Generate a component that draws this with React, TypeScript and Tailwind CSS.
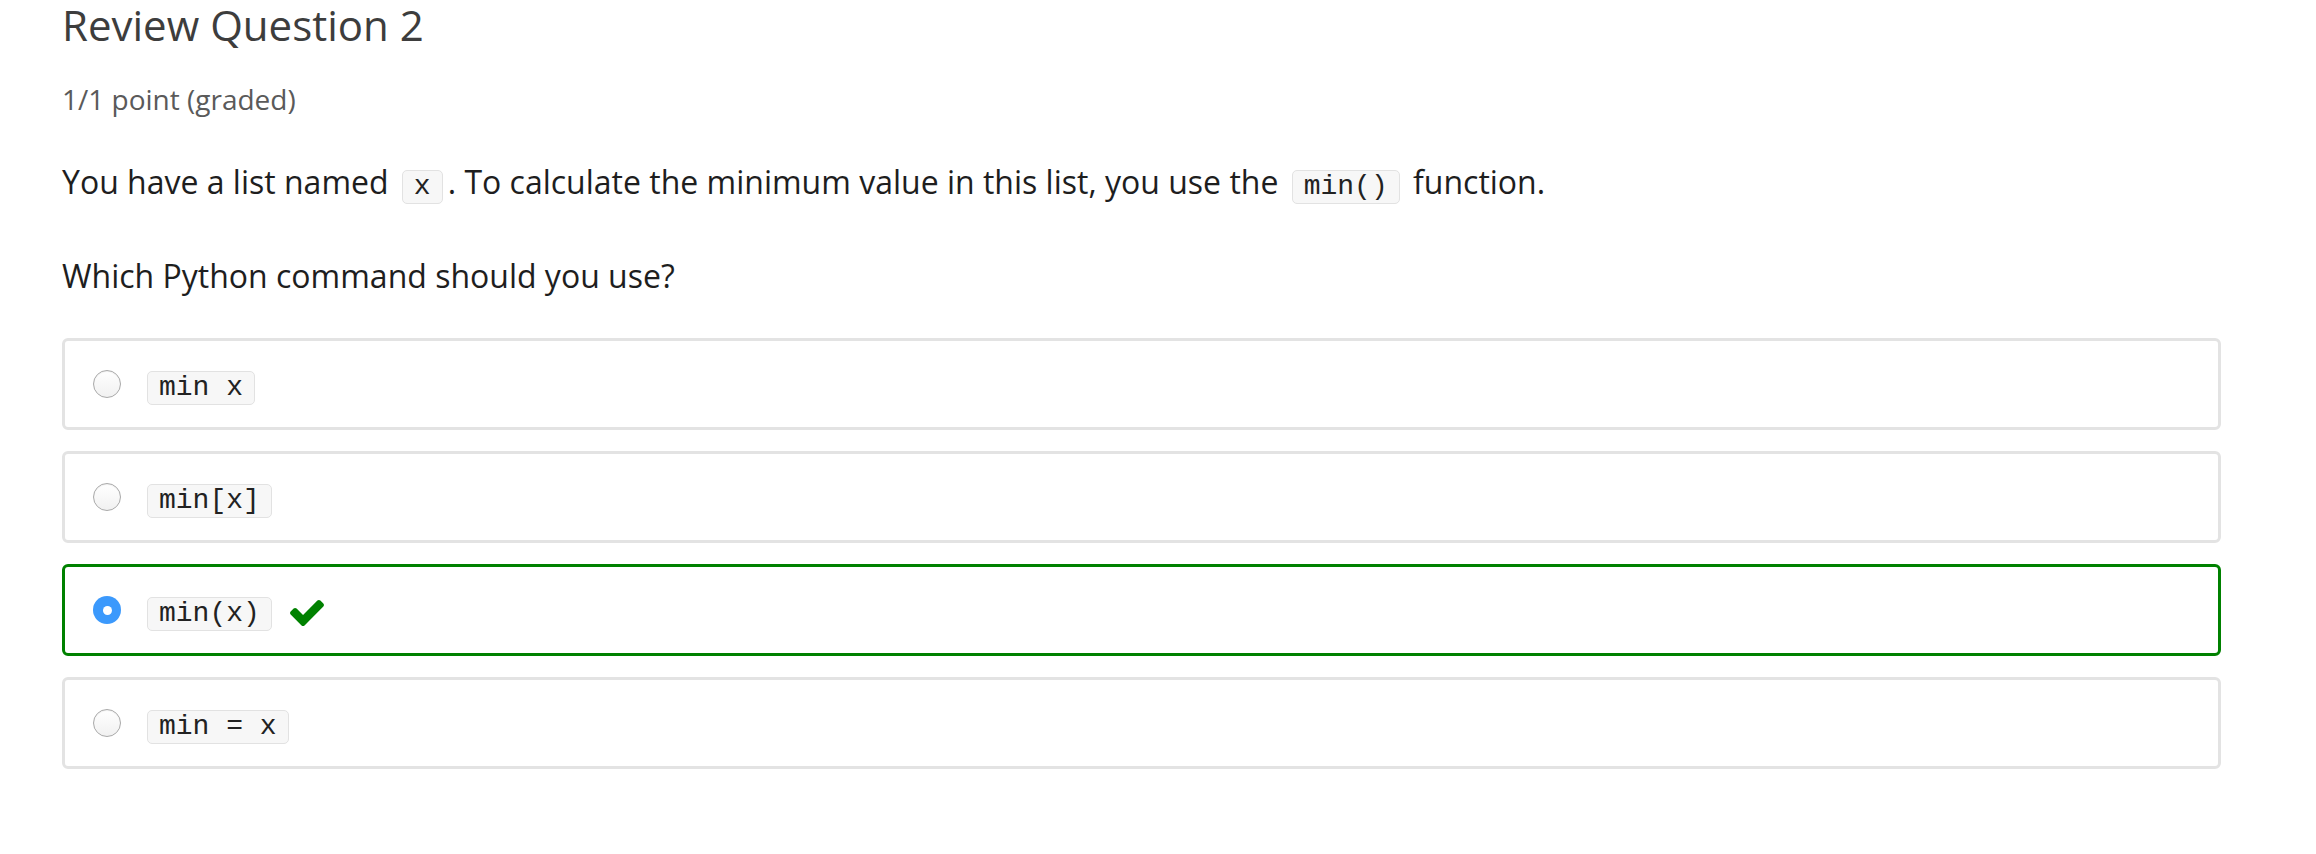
import { ReactNode } from 'react'

const options = [
  { id: 'a', code: 'min x', selected: false },
  { id: 'b', code: 'min[x]', selected: false },
  { id: 'c', code: 'min(x)', selected: true },
  { id: 'd', code: 'min = x', selected: false },
]

function Code({ children }: { children: ReactNode }) {
  return (
    <code className="inline-block mx-[5px] px-[11px] py-[1px] border border-[#e2e2e2] rounded-[5px] bg-[#f7f7f7] text-[#222] text-[28px] leading-[30px] font-['Liberation_Mono',monospace] whitespace-pre">
      {children}
    </code>
  )
}

function Radio({ checked }: { checked: boolean }) {
  if (checked) {
    return (
      <span className="flex items-center justify-center w-[28px] h-[28px] rounded-full bg-[#3b99fc] shrink-0">
        <span className="w-[9px] h-[9px] rounded-full bg-white" />
      </span>
    )
  }
  return (
    <span className="w-[28px] h-[28px] rounded-full border border-[#a9a9a9] bg-gradient-to-b from-white to-[#f1f1f1] shadow-[inset_0_1px_1px_rgba(0,0,0,0.06)] shrink-0" />
  )
}

function CheckIcon() {
  return (
    <svg viewBox="121 334 1550 1188" className="w-[34px] h-[26px] ml-[13px] -mt-[2px]" fill="#008100">
      <path d="M1671 566q0 40-28 68l-724 724-136 136q-28 28-68 28t-68-28l-136-136-362-362q-28-28-28-68t28-68l136-136q28-28 68-28t68 28l294 295 656-657q28-28 68-28t68 28l136 136q28 28 28 68z" />
    </svg>
  )
}

export default function App() {
  return (
    <div className="min-h-screen bg-white pl-[62px] pr-[95px] font-['Open_Sans',sans-serif]">
      <h2 className="text-[42px] leading-[50px] text-[#3d3d3d] font-normal">Review Question 2</h2>
      <p className="mt-[28px] text-[28px] leading-[42px] text-[#5a5a5a]">1/1 point (graded)</p>

      <p className="mt-[38px] text-[32px] leading-[48px] text-[#1e1e1e]">
        You have a list named <Code>x</Code>. To calculate the minimum value in this list, you use the <Code>min()</Code> function.
      </p>
      <p className="mt-[46px] text-[32px] leading-[48px] text-[#1e1e1e]">Which Python command should you use?</p>

      {/* Choices */}
      <div className="mt-[38px] flex flex-col gap-[21px]">
        {options.map((opt) => (
          <label
            key={opt.id}
            className={`flex items-center h-[92px] pl-[28px] rounded-[6px] border-[3px] ${
              opt.selected ? 'border-[#008100]' : 'border-[#e3e3e3]'
            }`}
          >
            <Radio checked={opt.selected} />
            <span className="flex items-center ml-[21px] mt-[8px]">
              <Code>{opt.code}</Code>
              {opt.selected && <CheckIcon />}
            </span>
          </label>
        ))}
      </div>
    </div>
  )
}
